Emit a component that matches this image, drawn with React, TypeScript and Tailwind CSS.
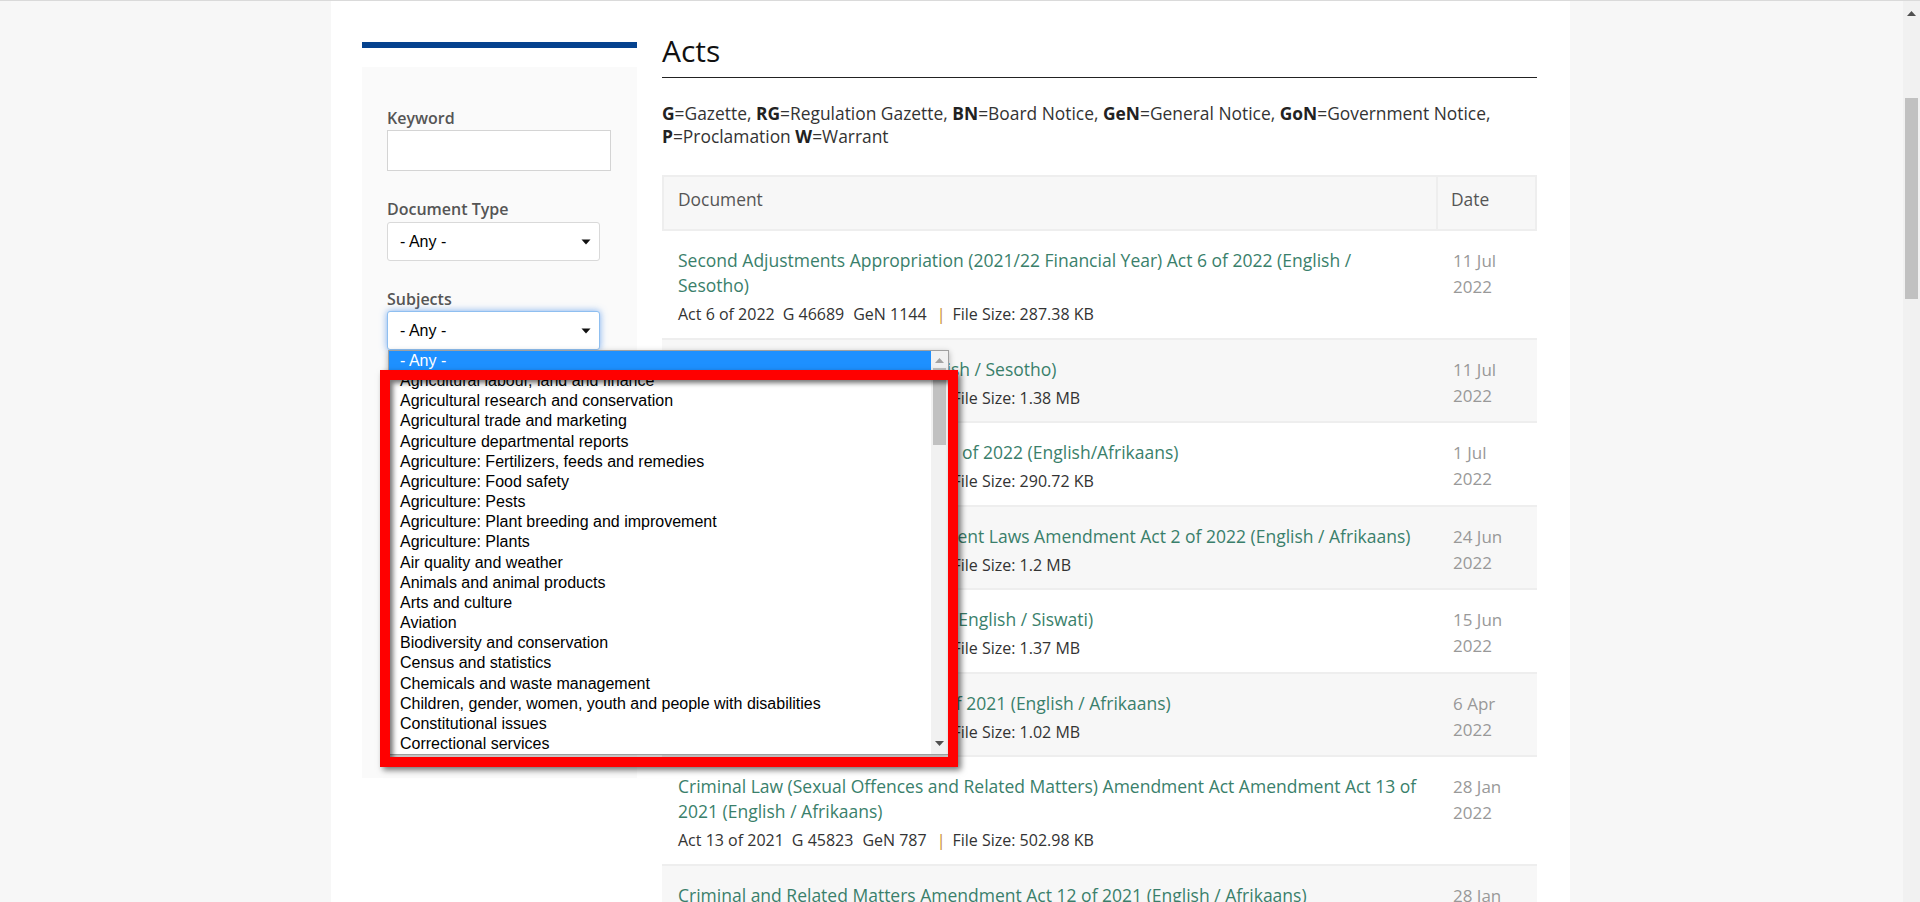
import React from 'react';

const subjects = [
  '- Any -',
  'Agricultural labour, land and finance',
  'Agricultural research and conservation',
  'Agricultural trade and marketing',
  'Agriculture departmental reports',
  'Agriculture: Fertilizers, feeds and remedies',
  'Agriculture: Food safety',
  'Agriculture: Pests',
  'Agriculture: Plant breeding and improvement',
  'Agriculture: Plants',
  'Air quality and weather',
  'Animals and animal products',
  'Arts and culture',
  'Aviation',
  'Biodiversity and conservation',
  'Census and statistics',
  'Chemicals and waste management',
  'Children, gender, women, youth and people with disabilities',
  'Constitutional issues',
  'Correctional services',
];

type Act = {
  title: string;
  act: string;
  g: string;
  gen: string;
  size: string;
  date: string;
};

const acts: Act[] = [
  {
    title: 'Second Adjustments Appropriation (2021/22 Financial Year) Act 6 of 2022 (English / Sesotho)',
    act: 'Act 6 of 2022',
    g: 'G 46689',
    gen: 'GeN 1144',
    size: '287.38 KB',
    date: '11 Jul 2022',
  },
  {
    title: 'Appropriation Act 7 of 2022 (English / Sesotho)',
    act: 'Act 7 of 2022',
    g: 'G 46690',
    gen: 'GeN 1145',
    size: '1.38 MB',
    date: '11 Jul 2022',
  },
  {
    title: 'Superior Courts Amendment Act 1 of 2022 (English/Afrikaans)',
    act: 'Act 1 of 2022',
    g: 'G 46651',
    gen: 'GeN 1121',
    size: '290.72 KB',
    date: '1 Jul 2022',
  },
  {
    title: 'Public Finance and Local Government Laws Amendment Act 2 of 2022 (English / Afrikaans)',
    act: 'Act 2 of 2022',
    g: 'G 46594',
    gen: 'GeN 1087',
    size: '1.2 MB',
    date: '24 Jun 2022',
  },
  {
    title: 'Division of Revenue Act 4 of 2022 (English / Siswati)',
    act: 'Act 4 of 2022',
    g: 'G 46551',
    gen: 'GeN 1062',
    size: '1.37 MB',
    date: '15 Jun 2022',
  },
  {
    title: 'Cybercrimes Amendment Act 20 of 2021 (English / Afrikaans)',
    act: 'Act 20 of 2021',
    g: 'G 46201',
    gen: 'GeN 912',
    size: '1.02 MB',
    date: '6 Apr 2022',
  },
  {
    title: 'Criminal Law (Sexual Offences and Related Matters) Amendment Act Amendment Act 13 of 2021 (English / Afrikaans)',
    act: 'Act 13 of 2021',
    g: 'G 45823',
    gen: 'GeN 787',
    size: '502.98 KB',
    date: '28 Jan 2022',
  },
  {
    title: 'Criminal and Related Matters Amendment Act 12 of 2021 (English / Afrikaans)',
    act: 'Act 12 of 2021',
    g: 'G 45822',
    gen: 'GeN 786',
    size: '611.4 KB',
    date: '28 Jan 2022',
  },
];

function Caret() {
  return (
    <svg width="10" height="6" viewBox="0 0 10 6" className="shrink-0">
      <path d="M0.5 0.5h9L5 5.5z" fill="#111" />
    </svg>
  );
}

function FakeSelect({ focused }: { focused?: boolean }) {
  return (
    <div
      className={
        focused
          ? 'flex h-[39px] w-[213px] items-center justify-between rounded-[3px] border border-[#8fbff0] bg-white pl-[12px] pr-[8px] shadow-[0_0_7px_rgba(82,148,236,0.75)]'
          : 'flex h-[39px] w-[213px] items-center justify-between rounded-[3px] border border-[#d9d9d9] bg-white pl-[12px] pr-[8px]'
      }
    >
      <span className="font-['Liberation_Sans',Arial,sans-serif] text-[16px] text-black">- Any -</span>
      <Caret />
    </div>
  );
}

function SubjectList() {
  return (
    <div className="absolute left-[1px] top-full z-10 flex h-[405px] w-[561px] overflow-hidden border border-[#a0a0a0] bg-white shadow-[0_2px_6px_rgba(0,0,0,0.3)] font-['Liberation_Sans',Arial,sans-serif] text-[16px] text-black">
      <ul className="flex-1">
        {subjects.map((s, i) => (
          <li
            key={s}
            className={
              i === 0
                ? 'h-[20.17px] bg-[#1e90ff] pl-[11px] leading-[20px] text-white'
                : 'h-[20.17px] pl-[11px] leading-[20px]'
            }
          >
            {s}
          </li>
        ))}
      </ul>
      <div className="flex w-[17px] flex-col items-center bg-[#f1f1f1]">
        <svg width="9" height="5" viewBox="0 0 9 5" className="mt-[7px]">
          <path d="M0 5L4.5 0 9 5z" fill="#a3a3a3" />
        </svg>
        <div className="mt-[5px] h-[77px] w-[13px] bg-[#c1c1c1]" />
        <div className="flex-1" />
        <svg width="9" height="5" viewBox="0 0 9 5" className="mb-[8px]">
          <path d="M0 0h9L4.5 5z" fill="#505050" />
        </svg>
      </div>
    </div>
  );
}

function Sidebar() {
  return (
    <aside className="w-[275px] shrink-0 pt-[41px]">
      <div className="h-[6px] bg-[#05428e]" />
      <div className="mt-[19px] h-[711px] bg-[#fafafa] pl-[25px] pt-[40px]">
        <label className="block text-[16px] font-semibold leading-[22px] text-[#555]">Keyword</label>
        <div className="mt-px h-[41px] w-[224px] border border-[#d4d4d4] bg-white" />

        <label className="mt-[27px] block text-[16px] font-semibold leading-[22px] text-[#555]">Document Type</label>
        <div className="mt-[2px]">
          <FakeSelect />
        </div>

        <label className="mt-[27px] block text-[16px] font-semibold leading-[22px] text-[#555]">Subjects</label>
        <div className="relative mt-px w-[213px]">
          <FakeSelect focused />
          <SubjectList />
          {/* annotation frame drawn over the open list */}
          <div className="pointer-events-none absolute left-[-7px] top-[59px] z-20 h-[397px] w-[578px] border-[10px] border-[#ff0000] shadow-[3px_3px_6px_rgba(0,0,0,0.55),inset_3px_3px_5px_rgba(0,0,0,0.55)]" />
        </div>
      </div>
    </aside>
  );
}

function Meta({ a }: { a: Act }) {
  return (
    <div className="mt-[5px] whitespace-nowrap text-[16px] leading-[23px] text-[#333]">
      <span>{a.act}</span>
      <span className="ml-[8px]">{a.g}</span>
      <span className="ml-[9px]">{a.gen}</span>
      <span className="ml-[10px] text-[#c8892b]">|</span>
      <span className="ml-[7px]">File Size: {a.size}</span>
    </div>
  );
}

function ActsTable() {
  return (
    <div className="mt-[27px]">
      <div className="flex h-[56px] border-2 border-[#eeeeee] bg-[#f7f7f7] text-[17.4px] leading-[25px] text-[#555]">
        <div className="w-[774px] border-r-2 border-[#eeeeee] pl-[14px] pt-[10px]">Document</div>
        <div className="flex-1 pl-[13px] pt-[10px]">Date</div>
      </div>
      {acts.map((a, i) => (
        <div
          key={a.title}
          className={
            i % 2 === 1
              ? 'flex border-b-2 border-[#eeeeee] bg-[#f7f7f7]'
              : 'flex border-b-2 border-[#eeeeee] bg-white'
          }
        >
          <div className="w-[776px] pb-[11.5px] pl-[16px] pr-[16px] pt-[17px]">
            <a className="text-[17.5px] leading-[25px] text-[#3a7f6b]">{a.title}</a>
            <Meta a={a} />
          </div>
          <div className="flex-1 pl-[15px] pr-[15px] pt-[17px] text-[17px] leading-[26px] text-[#999]">
            {a.date}
          </div>
        </div>
      ))}
    </div>
  );
}

function Legend() {
  const b = 'font-bold text-[#222]';
  return (
    <p className="mt-[24px] text-[17.4px] leading-[23px] text-[#333]">
      <span className={b}>G</span>=Gazette, <span className={b}>RG</span>=Regulation Gazette,{' '}
      <span className={b}>BN</span>=Board Notice, <span className={b}>GeN</span>=General Notice,{' '}
      <span className={b}>GoN</span>=Government Notice, <span className={b}>P</span>=Proclamation{' '}
      <span className={b}>W</span>=Warrant
    </p>
  );
}

function PageScrollbar() {
  return (
    <div className="flex w-[17px] shrink-0 flex-col items-center bg-[#f1f1f1]">
      <svg width="9" height="5" viewBox="0 0 9 5" className="mt-[10px]">
        <path d="M0 5L4.5 0 9 5z" fill="#505050" />
      </svg>
      <div className="mt-[82px] h-[201px] w-[13px] bg-[#c1c1c1]" />
    </div>
  );
}

export default function App() {
  return (
    <div className="flex h-[902px] overflow-hidden border-t border-[#dadada] bg-[#f7f7f7] font-['Open_Sans',sans-serif]">
      <div className="flex-1">
        <div className="ml-[331px] flex h-full w-[1239px] bg-white pl-[31px]">
          <Sidebar />
          <main className="ml-[25px] w-[875px] pt-[33px]">
            <h1 className="border-b border-[#222] pb-[10px] text-[30px] font-normal leading-[33px] text-[#111]">
              Acts
            </h1>
            <Legend />
            <ActsTable />
          </main>
        </div>
      </div>
      <PageScrollbar />
    </div>
  );
}
